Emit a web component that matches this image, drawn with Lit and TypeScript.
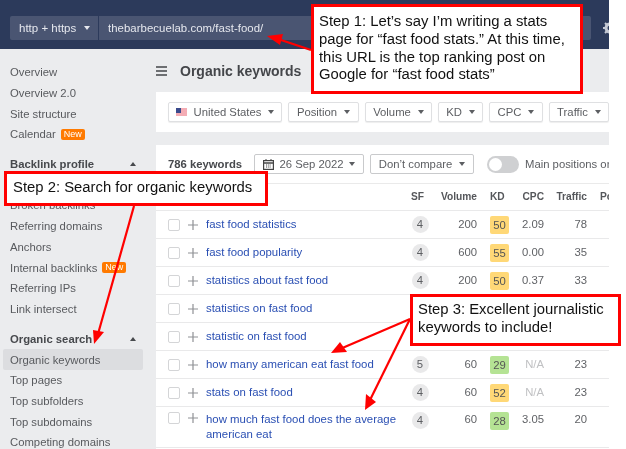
import { LitElement, html, css, svg } from "lit";
import { customElement } from "lit/decorators.js";

const caret = html`<i class="caret"></i>`;
type Row = [string, number?, number?, string?, string?, number?];
const rows: Row[] = [
  ["fast food statistics", 4, 200, "50", "2.09", 78],
  ["fast food popularity", 4, 600, "55", "0.00", 35],
  ["statistics about fast food", 4, 200, "50", "0.37", 33],
  ["statistics on fast food"],
  ["statistic on fast food"],
  ["how many american eat fast food", 5, 60, "29", "N/A", 23],
  ["stats on fast food", 4, 60, "52", "N/A", 23],
  ["how much fast food does the average american eat", 4, 60, "28", "3.05", 20],
];

@customElement("app-root")
export class AppRoot extends LitElement {
  static styles = css`
    :host { display: block; width: 626px; height: 449px; background: #fff; position: relative; overflow: hidden;
      font-family: "Liberation Sans", Arial, sans-serif; }
    * { box-sizing: border-box; }
    .app { width: 609px; height: 449px; display: flex; flex-direction: column; overflow: hidden; color: #555; font-size: 11.3px; filter: blur(.3px); }
    header { flex: none; height: 49px; background: #2c3a5b; padding: 16px 0 0 10px; display: flex; gap: 1px; color: #e6e8ee; overflow: hidden; }
    .proto, .url { flex: none; height: 24px; background: #4a5572; display: flex; align-items: center; font-size: 11.5px; }
    .proto { width: 88px; padding-left: 9px; gap: 8px; border-radius: 2px 0 0 2px; }
    .url { width: 492px; padding-left: 9px; border-radius: 0 2px 2px 0; font-size: 11.4px; letter-spacing: .05px; }
    .caret { display: inline-block; width: 0; height: 0; border: 3px solid transparent; border-top: 4px solid currentColor; border-bottom: 0; flex: none; }
    .gear { margin: 4px 0 0 10px; flex: none; color: #c5c9d4; }
    .body { flex: 1; display: flex; background: #ebecee; min-height: 0; }
    nav { flex: none; width: 156px; padding: 13px 13px 0 3px; }
    nav div { padding-left: 7px; height: 20.7px; white-space: nowrap; color: #585a5e; display: flex; align-items: center; }
    nav .h { font-weight: 700; color: #47494d; justify-content: space-between; padding-right: 7px; margin-top: 9px; }
    nav .h.s2 { margin-top: 9.4px; }
    nav .up { border: 3px solid transparent; border-bottom: 4px solid #47494d; border-top: 0; }
    nav .on { background: #dcdde0; border-radius: 2px; }
    .new { background: #ff7a00; color: #fff; font-size: 9px; line-height: 11px; padding: 0 3px; border-radius: 2px; margin-left: 5px; }
    main { flex: 1; min-width: 0; display: flex; flex-direction: column; }
    .title { flex: none; height: 43px; display: flex; align-items: center; gap: 13px; font-size: 14px; font-weight: 700; color: #44464a; }
    .filters { flex: none; height: 40px; background: #fff; display: flex; align-items: center; gap: 6px; padding: 0 0 0 12px; overflow: hidden; }
    .btn { flex: none; height: 20px; border: 1px solid #dfe0e2; border-radius: 2px; display: flex; align-items: center; justify-content: center; gap: 7px; background: #fff; color: #5c5e62; box-shadow: 0 1px 1px #eee; }
    .card { flex: 1; margin-top: 13px; background: #fff; min-height: 0; overflow: hidden; }
    .summary { height: 39px; padding: 0 0 0 12px; display: flex; align-items: center; white-space: nowrap; border-bottom: 1px solid #eaeaea; color: #5c5e62; }
    .summary b { color: #47494d; width: 86px; flex: none; }
    .summary .btn { border-color: #c9cacc; box-shadow: none; }
    .toggle { flex: none; width: 32px; height: 17px; border-radius: 9px; background: #cfd0d2; margin: 0 6px 0 13px; padding: 2px; }
    .toggle i { display: block; width: 13px; height: 13px; border-radius: 50%; background: #fff; }
    .row { display: grid; grid-template-columns: 19px 19px 199px 30px 42px 32px 35px 43px 22px; padding-left: 12px; align-items: center; min-height: 28px; border-bottom: 1px solid #e9e9ea; color: #606266; line-height: 14.5px; }
    .row.head { height: 27px; min-height: 27px; font-weight: 700; color: #55575b; font-size: 10.2px; white-space: nowrap; }
    .row.tall { min-height: 41px; align-items: start; padding-top: 5px; }
    .r { text-align: right; }
    .sfh { text-align: center; padding-right: 5px; }
    .box { display: block; width: 12px; height: 12px; border: 1px solid #d4d5d7; border-radius: 2px; background: #fff; }
    .plus { display: block; color: #8f9195; }
    a { color: #2a4fb3; text-decoration: none; font-size: 11.4px; }
    .sf { display: block; width: 17px; height: 17px; line-height: 17px; border-radius: 50%; background: #e9e9ea; text-align: center; margin: 0 auto; color: #5c5e62; }
    .kd { display: block; width: 19px; height: 18px; line-height: 18px; margin-left: 13px; border-radius: 2px; text-align: center; color: #555; }
    .y { background: #ffd877; }
    .g { background: #b5e394; }
    .na { color: #c0c1c3; }
    .note { position: absolute; background: #fff; border: 3px solid #f00; color: #111; font-size: 14.85px; line-height: 17.8px; padding: 6px 0 0 5px; white-space: nowrap; filter: blur(.25px); }
    .n1 { left: 311px; top: 4px; width: 272px; height: 90px; }
    .n2 { left: 4px; top: 171px; width: 264px; height: 35px; padding-left: 6px; padding-top: 5px; }
    .n3 { left: 410px; top: 294px; width: 211px; height: 52px; padding-left: 5px; padding-top: 4px; }
    .arrows { position: absolute; inset: 0; width: 626px; height: 449px; pointer-events: none; }
  `;

  private nav(label: string, on = false, isNew = false) {
    return html`<div class=${on ? "on" : ""}>${label}${isNew ? html`<span class="new">New</span>` : ""}</div>`;
  }

  private row(r: Row, i: number) {
    const [name, sf, vol, kd, cpc, tr] = r;
    return html`<div class="row ${i === 7 ? "tall" : ""}">
      <span class="box"></span>
      <svg class="plus" width="12" height="12" viewBox="0 0 12 12"><path d="M6 1v10M1 6h10" stroke="currentColor" stroke-width="1.2"/></svg>
      <a>${name}</a>
      ${sf === undefined
        ? ""
        : html`<span class="sf">${sf}</span>
            <span class="r">${vol}</span>
            <span class="kd ${+(kd as string) < 40 ? "g" : "y"}">${kd}</span>
            <span class="r ${cpc === "N/A" ? "na" : ""}">${cpc}</span>
            <span class="r">${tr}</span>`}
    </div>`;
  }

  render() {
    return html`
      <div class="app">
        <header>
          <div class="proto">http + https ${caret}</div>
          <div class="url">thebarbecuelab.com/fast-food/</div>
          <svg class="gear" width="16" height="16" viewBox="0 0 16 16"><circle cx="8" cy="8" r="4" fill="none" stroke="currentColor" stroke-width="3"/><path d="M8 1v3M8 12v3M1 8h3M12 8h3M3 3l2 2M11 11l2 2M13 3l-2 2M5 11l-2 2" stroke="currentColor" stroke-width="2"/></svg>
        </header>
        <div class="body">
          <nav>
            ${this.nav("Overview")}${this.nav("Overview 2.0")}${this.nav("Site structure")}${this.nav("Calendar", false, true)}
            <div class="h">Backlink profile <i class="up"></i></div>
            ${this.nav("")}${this.nav("Broken backlinks")}${this.nav("Referring domains")}${this.nav("Anchors")}
            ${this.nav("Internal backlinks", false, true)}${this.nav("Referring IPs")}${this.nav("Link intersect")}
            <div class="h s2">Organic search <i class="up"></i></div>
            ${this.nav("Organic keywords", true)}${this.nav("Top pages")}${this.nav("Top subfolders")}${this.nav("Top subdomains")}${this.nav("Competing domains")}
          </nav>
          <main>
            <div class="title">
              <svg width="11" height="10" viewBox="0 0 11 10"><path d="M0 1h11M0 5h11M0 9h11" stroke="#44464a" stroke-width="1.3"/></svg>
              <span>Organic keywords</span>
            </div>
            <div class="filters">
              <div class="btn" style="width:114px">
                <svg width="11" height="9" viewBox="0 0 11 9"><rect width="11" height="9" fill="#fff"/><path d="M0 1h11M0 3h11M0 5h11M0 7h11" stroke="#e85a6a" stroke-width="1"/><rect width="5" height="5" fill="#3a4a8c"/></svg>
                United States ${caret}</div>
              <div class="btn" style="width:71px">Position ${caret}</div>
              <div class="btn" style="width:67px">Volume ${caret}</div>
              <div class="btn" style="width:45px">KD ${caret}</div>
              <div class="btn" style="width:54px">CPC ${caret}</div>
              <div class="btn" style="width:60px">Traffic ${caret}</div>
            </div>
            <div class="card">
              <div class="summary">
                <b>786 keywords</b>
                <div class="btn" style="width:110px;gap:5px">
                  <svg width="11" height="11" viewBox="0 0 11 11"><rect x=".6" y="1.6" width="9.8" height="8.8" fill="none" stroke="#444" stroke-width="1.2"/><path d="M1 4h9" stroke="#444" stroke-width="1.5"/><path d="M3 0v2M8 0v2" stroke="#444"/><path d="M3 6h5M3 8h5" stroke="#444" stroke-dasharray="1.2 1"/></svg>
                  26 Sep 2022 ${caret}</div>
                <div class="btn" style="width:104px;margin-left:6px">Don’t compare ${caret}</div>
                <div class="toggle"><i></i></div>
                <span>Main positions only</span>
              </div>
              <div class="row head">
                <span></span><span></span><span></span>
                <span class="sfh">SF</span><span class="r">Volume</span><span style="padding-left:13px">KD</span><span class="r">CPC</span><span class="r">Traffic</span><span style="padding-left:13px;overflow:hidden">Po</span>
              </div>
              ${rows.map((r, i) => this.row(r, i))}
            </div>
          </main>
        </div>
      </div>
      <svg class="arrows" viewBox="0 0 626 449">
        ${svg`<g stroke="#f00" stroke-width="2.2" fill="#f00">
          <path d="M311 50L278 39"/><path d="M267 36L283 34L280 45Z" stroke="none"/>
          <path d="M134 206L98 334"/><path d="M94 344L93 330L104 332Z" stroke="none"/>
          <path d="M410 319L340 349"/><path d="M331 353L340 342L347 352Z" stroke="none"/>
          <path d="M410 319L370 400"/><path d="M365 410L366 394L376 402Z" stroke="none"/>
        </g>`}
      </svg>
      <div class="note n1">Step 1: Let’s say I’m writing a stats<br>page for “fast food stats.” At this time,<br>this URL is the top ranking post on<br>Google for “fast food stats”</div>
      <div class="note n2">Step 2: Search for organic keywords</div>
      <div class="note n3">Step 3: Excellent journalistic<br>keywords to include!</div>
    `;
  }
}
